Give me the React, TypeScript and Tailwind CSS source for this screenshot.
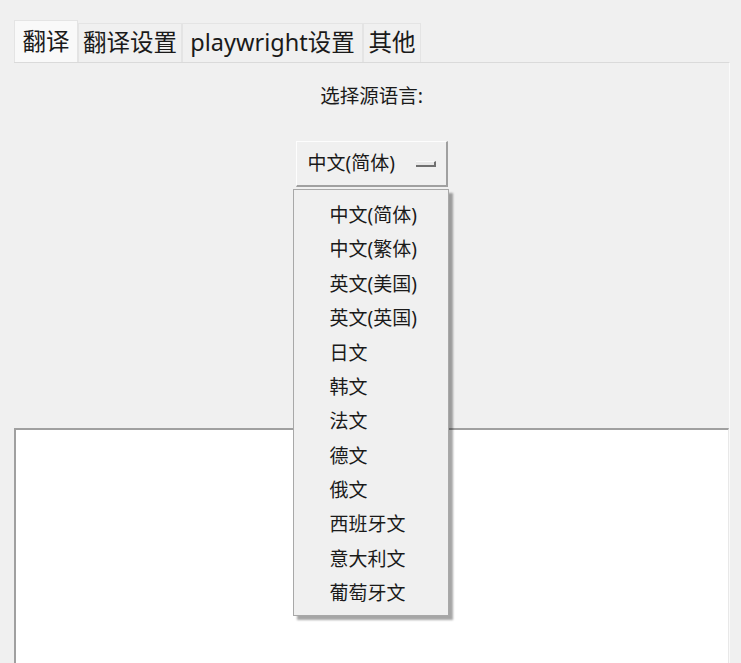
import { useState } from "react";

const tabs = ["翻译", "翻译设置", "playwright设置", "其他"];

const languages = [
  "中文(简体)",
  "中文(繁体)",
  "英文(美国)",
  "英文(英国)",
  "日文",
  "韩文",
  "法文",
  "德文",
  "俄文",
  "西班牙文",
  "意大利文",
  "葡萄牙文",
];

const font = "font-['Noto_Sans','Noto_Sans_CJK_SC',sans-serif]";

const App = () => {
  const [active, setActive] = useState(0);
  const [lang, setLang] = useState(languages[0]);
  const [open, setOpen] = useState(true);

  return (
    <div className={`w-[741px] h-[663px] overflow-hidden bg-[#f0f0f0] text-[#1a1a1a] ${font}`}>
      <div className="pt-[20px] pl-[14px] pr-[11px] flex flex-col h-full">
        {/* tab strip */}
        <div className="flex items-end h-[42px]">
          {tabs.map((t, i) => (
            <button
              key={t}
              onClick={() => setActive(i)}
              className={`flex items-center justify-center text-[23.5px] leading-none px-0 whitespace-nowrap border-t border-l border-r border-[#e4e4e4] ${
                i === active ? "h-[42px] bg-[#f9f9f9]" : "h-[39px] bg-[#f0f0f0]"
              } ${i === 0 ? "w-[64px]" : i === 1 ? "w-[104px]" : i === 2 ? "w-[181px]" : "w-[58px]"}`}
            >
              {t}
            </button>
          ))}
        </div>

        {/* tab page */}
        <div className="flex-1 flex flex-col items-center border-t border-[#dadada] border-r border-r-[#fafafa] bg-[#f0f0f0]">
          <div className="mt-[20px] h-[26px] flex items-center text-[19.5px]">选择源语言:</div>

          <div className="relative mt-[32px]">
            <button
              onClick={() => setOpen(!open)}
              className="w-[152px] h-[46px] flex items-center justify-between pl-[11px] pr-[10px] bg-[#f0f0f0] border border-t-[#fdfdfd] border-l-[#fdfdfd] border-r-2 border-b-2 border-r-[#a0a0a0] border-b-[#a0a0a0] text-[19px] whitespace-nowrap"
            >
              <span>{lang}</span>
              <span className="w-[20px] h-[6px] border-t border-t-[#fafafa] border-b-2 border-r-2 border-b-[#707070] border-r-[#707070] bg-[#e8e8e8]" />
            </button>

            {open && (
              <ul className="absolute left-[-3px] top-full mt-[2px] z-10 w-[156px] pt-[8px] pb-[4px] bg-[#f0f0f0] border border-[#a8a8a8] shadow-[4px_4px_2px_rgba(0,0,0,0.35)]">
                {languages.map((l) => (
                  <li
                    key={l}
                    onClick={() => {
                      setLang(l);
                      setOpen(false);
                    }}
                    className="h-[34.4px] flex items-center pl-[36px] text-[19px] cursor-default whitespace-nowrap"
                  >
                    {l}
                  </li>
                ))}
              </ul>
            )}
          </div>

          {/* output text box */}
          <textarea className="mt-[241px] w-full flex-1 bg-white border-t-2 border-l-2 border-t-[#a0a0a0] border-l-[#a0a0a0] border-r border-r-[#e8e8e8] resize-none outline-none" />
        </div>
      </div>
    </div>
  );
};

export default App;
